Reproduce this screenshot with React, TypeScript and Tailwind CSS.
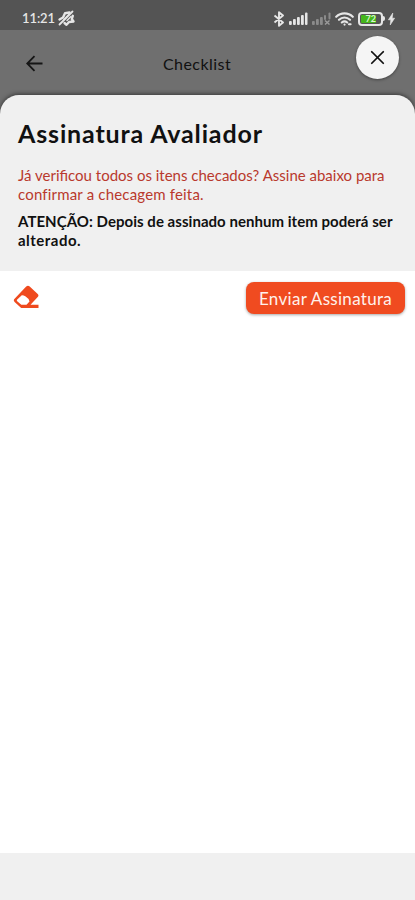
import { X } from "lucide-react";

function StatusBar() {
  return (
    <div className="h-[30px] shrink-0 bg-[#545454] flex items-center pt-[7px] pl-[22px] pr-[20px] text-[#e6e6e6]">
      <span className="text-[13px] font-semibold leading-none tracking-[-0.1px]">11:21</span>
      <svg className="ml-[2px]" width="19" height="17" viewBox="0 0 19 17" fill="none" stroke="currentColor" strokeWidth="2.4" strokeLinecap="round" strokeLinejoin="round">
        <path d="M2.5 9.5 6 7.5 8 3.2 12.5 2.5" />
        <path d="M15.8 5.8 14.8 9l1.7 2.5-4.5.5-2.5 2.8-2-1.8" />
        <path d="M7 9.5 12 4.5M10 10.5l4-4" strokeWidth="1.5" />
        <path d="M2.5 14.5 15.5 1.5" strokeWidth="1.8" />
      </svg>
      <div className="flex items-center ml-auto">
        <svg width="12" height="16" viewBox="0 0 12 16" fill="none" stroke="currentColor" strokeWidth="1.9" strokeLinejoin="round">
          <path d="M1.5 4.5 10 11.5 6 14.8V1.2L10 4.5 1.5 11.5" />
        </svg>
        <svg className="ml-[4px]" width="19" height="13" viewBox="0 0 19 13" fill="currentColor">
          <rect x="0" y="9" width="2.8" height="4" rx="1" />
          <rect x="4" y="7" width="2.8" height="6" rx="1" />
          <rect x="8" y="5" width="2.8" height="8" rx="1" />
          <rect x="12" y="3" width="2.8" height="10" rx="1" />
          <rect x="16" y="0.5" width="2.5" height="12.5" rx="1" />
        </svg>
        <svg className="ml-[4px]" width="19" height="13" viewBox="0 0 19 13" fill="#8b8b8b">
          <rect x="0" y="9" width="2.8" height="4" rx="1" />
          <rect x="4" y="7" width="2.8" height="6" rx="1" />
          <rect x="8" y="5" width="2.8" height="8" rx="1" />
          <rect x="12" y="3" width="2" height="5" rx="1" />
          <rect x="16.5" y="0.5" width="2" height="7" rx="1" />
          <path d="m13 8.5 4.5 4M17.5 8.5l-4.5 4" stroke="#9b9b9b" strokeWidth="1.4" />
        </svg>
        <svg className="ml-[4px]" width="19" height="14" viewBox="0 0 19 14" fill="none" stroke="currentColor" strokeWidth="2.1" strokeLinecap="round">
          <path d="M1.2 4.8C5.8.2 13.2.2 17.8 4.8M4 7.8c3.2-3 7.8-3 11 0M6.8 10.5c1.7-1.5 3.7-1.5 5.4 0" />
          <path d="m9.5 12.6 .1 0M14 12.2h1.6" />
        </svg>
        <div className="ml-[4px] w-[25px] h-[14px] rounded-[4px] border-2 border-[#e6e6e6] p-px flex">
          <div className="w-[15px] rounded-[1px] bg-[#45b51c] text-[#d8f5cc] text-[9px] font-bold leading-[8px] text-right">72</div>
        </div>
        <div className="w-[2px] h-[5px] rounded-r bg-[#e6e6e6]" />
        <svg className="ml-[3px]" width="7" height="12" viewBox="0 0 7 12" fill="currentColor" stroke="currentColor" strokeWidth="0.6">
          <path d="M4.8 0 0.4 6.8h2.4L2.2 12 6.6 5.2H4.2z" />
        </svg>
      </div>
    </div>
  );
}

export default function App() {
  return (
    <div className="w-full h-[900px] flex flex-col overflow-hidden bg-[#6f6f6f] font-['Lato',sans-serif] text-[#111]">
      <StatusBar />
      <header className="h-[65px] shrink-0 grid grid-cols-[1fr_auto_1fr] items-center px-[26px] relative">
        <svg className="mt-[2px]" width="17" height="17" viewBox="0 0 17 17" fill="none" stroke="#151515" strokeWidth="1.8">
          <path d="M16.5 8.5H1.5M8.5 1.2 1.2 8.5l7.3 7.3" />
        </svg>
        <h2 className="text-[16px] leading-5 mt-[2px] ml-[-21px] whitespace-nowrap tracking-[0.45px]">Checklist</h2>
        <button className="absolute right-[16px] top-[6px] size-[43px] rounded-full bg-[#f5f5f5] shadow-[0_1px_3px_rgba(0,0,0,0.4)] flex items-center justify-center">
          <X size={23} strokeWidth={1.8} color="#111" />
        </button>
      </header>
      <main className="flex-1 flex flex-col bg-[#f0f0f0] rounded-t-[19px] shadow-[0_-1px_4px_rgba(0,0,0,0.5)] overflow-hidden">
        <section className="h-[176px] shrink-0 px-[18px] pt-[22px]">
          <h1 className="text-[25px] font-bold leading-[32px] whitespace-nowrap tracking-[0.85px]">Assinatura Avaliador</h1>
          <p className="mt-[17px] text-[15px] leading-[19px] text-[#b9392d] whitespace-nowrap">
            <span className="block w-fit">Já verificou todos os itens checados? Assine abaixo para</span>
            <span className="block w-fit tracking-[0.18px]">confirmar a checagem feita.</span>
          </p>
          <p className="mt-[8px] text-[15px] leading-[19px] font-bold whitespace-nowrap">
            <span className="block w-fit tracking-[0.04px]">ATENÇÃO: Depois de assinado nenhum item poderá ser</span>
            <span className="block w-fit tracking-[0.5px]">alterado.</span>
          </p>
        </section>
        <section className="h-[582px] shrink-0 bg-white flex items-start justify-between pl-[13px] pr-[10px] pt-[11px]">
          <svg className="mt-[3px]" width="26" height="24" viewBox="0 0 26 24">
            <path fill="#ef4a1e" fillRule="evenodd" d="M13.2 1.4q1.8-1.4 3.5 0l8 7.5q1.5 1.5 0 3.1L17.5 19.8h8v3.2H8.2L1.6 17q-1.6-1.7 0-3.3ZM8.8 10.2 4.2 14.4q-.8.9 0 1.8l4.1 3.6h5.2l3-3.2Q15.6 13 12.3 11.2 10.4 10 8.8 10.2Z" />
          </svg>
          <button className="w-[159px] h-[32px] rounded-[8px] bg-[#f04b20] shadow-[0_1px_3px_rgba(0,0,0,0.35)] text-[#fff2ec] text-[17px] leading-none whitespace-nowrap tracking-[0.3px]">
            Enviar Assinatura
          </button>
        </section>
      </main>
    </div>
  );
}
